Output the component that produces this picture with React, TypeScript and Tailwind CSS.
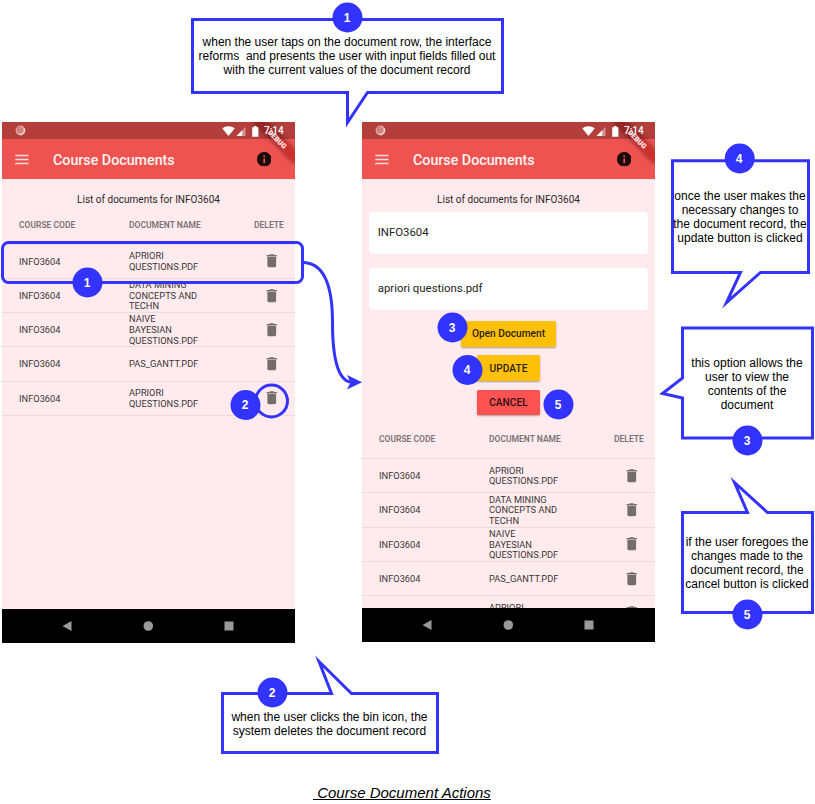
import type { ReactNode } from "react";

const documents: string[][] = [
  ["APRIORI", "QUESTIONS.PDF"],
  ["DATA MINING", "CONCEPTS AND", "TECHN"],
  ["NAIVE", "BAYESIAN", "QUESTIONS.PDF"],
  ["PAS_GANTT.PDF"],
  ["APRIORI", "QUESTIONS.PDF"],
];

function TrashIcon() {
  return (
    <svg viewBox="0 0 24 24" className="block h-[17.500px] w-[17.500px] fill-[#756c6e]">
      <path d="M6 19c0 1.1.9 2 2 2h8c1.1 0 2-.9 2-2V6.700H6V19zM19 4h-3.5l-1-1h-5l-1 1H5v2h14V4z" />
    </svg>
  );
}

function StatusBar() {
  return (
    <div className="relative z-10 flex h-[17px] items-center bg-[#00000040] pl-[13px]">
      <svg viewBox="0 0 11 11" className="h-[11px] w-[11px]">
        <circle cx="5.5" cy="5.5" r="4.9" fill="#e2a9a8" />
        <circle cx="4.9" cy="4.9" r="3.4" fill="#cf8180" />
        <path d="M9 3.2A4.3 4.3 0 0 1 5 9.6" fill="none" stroke="#f5dedd" strokeWidth="1" />
      </svg>
      <svg viewBox="0 0 38 12" className="ml-[196px] h-[12px] w-[38px]">
        <path d="M0.3 3.4C3.8.4 9.200.4 12.700 3.400L6.500 11z" fill="#fff" />
        <path d="M23.500 2v9h-9z" fill="#d58f8e" />
        <path d="M20.200 5.300V11h-5.700z" fill="#fff" />
        <path d="M32 1h2.600v1.200h1.800v9.600h-6.200V2.200H32z" fill="#fff" />
      </svg>
      <span className="ml-[4px] text-[10px] font-medium leading-[17px] text-white">7:14</span>
    </div>
  );
}

function AppBar() {
  return (
    <div className="flex h-[40px] items-center pl-[13px] pr-[24px]">
      <svg viewBox="0 0 14 11" className="h-[11px] w-[14px]">
        <path d="M0.300 1.500h13.200M0.300 5.500h13.200M0.300 9.500h13.200" stroke="#fbdddc" strokeWidth="1.600" />
      </svg>
      <span className="ml-[24px] pt-[1.500px] text-[14.260px] font-medium leading-[20px] text-[#fff4f4]">
        Course Documents
      </span>
      <svg viewBox="2 2 20 20" className="ml-auto h-[14.500px] w-[14.500px] fill-[#1b0b0b]">
        <path d="M12 2C6.480 2 2 6.480 2 12s4.480 10 10 10 10-4.480 10-10S17.520 2 12 2zm1.200 15.200h-2.400v-6.400h2.400v6.400zm0-8h-2.400V6.800h2.400v2.400z" />
      </svg>
    </div>
  );
}

function DebugRibbon() {
  return (
    <>
      <div className="absolute right-0 top-0 h-[57px] w-[57px] overflow-hidden">
        <div className="absolute left-[11.300px] top-[13px] h-[8.600px] w-[57px] rotate-45 bg-[#b71c1ca0] shadow-[0_0_5px_rgba(0,0,0,0.500)]" />
      </div>
      <div className="absolute right-0 top-0 z-20 h-[57px] w-[57px] overflow-hidden">
        <div className="absolute left-[11.300px] top-[13px] flex h-[8.600px] w-[57px] rotate-45 items-center justify-center pt-px text-[7.200px] font-black leading-none text-[#fff0f0]">
          DEBUG
        </div>
      </div>
    </>
  );
}

function TableHeader() {
  return (
    <div className="flex h-[40px] shrink-0 items-center border-b border-[#eddadd] pl-[17px] pt-[1.500px] text-[8.500px] font-semibold leading-none text-[#7b7274]">
      <span className="w-[110px]">COURSE CODE</span>
      <span className="w-[125px]">DOCUMENT NAME</span>
      <span>DELETE</span>
    </div>
  );
}

function TableRow({ name }: { name: string[] }) {
  return (
    <div className="flex h-[34.250px] shrink-0 items-center border-b border-[#eddadd] pl-[17px] text-[9.270px] leading-[10.600px] text-[#3a3637]">
      <span className="w-[110px] pt-[1.500px]">INFO3604</span>
      <span className="w-[133.500px] pt-[1.500px]">
        {name.map((line) => (
          <span key={line} className="block whitespace-nowrap">
            {line}
          </span>
        ))}
      </span>
      <TrashIcon />
    </div>
  );
}

function NavBar() {
  return (
    <div className="flex h-[34px] shrink-0 items-center bg-black pl-[60px]">
      <svg viewBox="0 0 172 10" className="h-[10px] w-[172px] fill-[#999]">
        <path d="M9.500 0v10L.5 5z" />
        <circle cx="86.300" cy="5" r="4.800" />
        <rect x="162.500" y="0.500" width="9" height="9" />
      </svg>
    </div>
  );
}

function Phone({ className, children }: { className: string; children: ReactNode }) {
  return (
    <div
      className={`absolute flex w-[293px] flex-col overflow-hidden bg-[#ffebee] font-['Roboto',sans-serif] ${className}`}
    >
      <div className="relative shrink-0 overflow-hidden bg-[#ef5350]">
        <StatusBar />
        <AppBar />
        <DebugRibbon />
      </div>
      <div className="flex min-h-0 flex-1 flex-col overflow-hidden">
        <p className="mt-[12px] h-[16px] shrink-0 pt-px text-center text-[10px] leading-[16px] text-[#2a2627]">
          List of documents for INFO3604
        </p>
        {children}
      </div>
      <NavBar />
    </div>
  );
}

function Field({ children }: { children: ReactNode }) {
  return (
    <div className="mx-[7px] flex h-[42px] shrink-0 items-center rounded-[4px] bg-white pl-[8.700px] text-[11.400px] leading-none text-[#222]">
      {children}
    </div>
  );
}

function ActionButton({ className, children }: { className: string; children: ReactNode }) {
  return (
    <button
      className={`block h-[25.700px] rounded-[1.500px] pt-px text-[10.200px] font-medium leading-none shadow-[0_1px_2px_rgba(0,0,0,0.350)] ${className}`}
    >
      {children}
    </button>
  );
}

const badges = [
  { label: "1", cx: 347.5, cy: 17.5 },
  { label: "1", cx: 87.5, cy: 282.5 },
  { label: "2", cx: 245.5, cy: 405 },
  { label: "3", cx: 452.5, cy: 327.5 },
  { label: "4", cx: 467.5, cy: 370 },
  { label: "5", cx: 558.5, cy: 404.5 },
  { label: "4", cx: 739.7, cy: 158.5 },
  { label: "3", cx: 747.5, cy: 440.5 },
  { label: "5", cx: 747.5, cy: 614.5 },
  { label: "2", cx: 272.5, cy: 692.5 },
];

function Note({ className, lines }: { className: string; lines: string[] }) {
  return (
    <div className={`absolute whitespace-pre text-center text-[12px] leading-[14px] text-black ${className}`}>
      {lines.map((line) => (
        <div key={line}>{line}</div>
      ))}
    </div>
  );
}

export default function App() {
  return (
    <div className="relative h-[804px] w-[815px] overflow-hidden bg-white font-['Liberation_Sans',Arial,sans-serif]">
      <Phone className="left-[2px] top-[122px] h-[521px]">
        <div className="-mt-[2.500px] flex flex-col">
          <TableHeader />
          {documents.map((name, i) => (
            <TableRow key={i} name={name} />
          ))}
        </div>
      </Phone>

      <Phone className="left-[362px] top-[122px] h-[520px]">
        <div className="mt-[4.500px] flex shrink-0 flex-col gap-[14.200px]">
          <Field>INFO3604</Field>
          <Field>apriori questions.pdf</Field>
        </div>
        <div className="mt-[11.500px] flex shrink-0 flex-col items-center gap-[8.500px]">
          <ActionButton className="w-[95px] bg-[#ffc107] text-[#2b2205]">Open Document</ActionButton>
          <ActionButton className="w-[63px] bg-[#ffc107] text-[#2b2205]">UPDATE</ActionButton>
          <ActionButton className="w-[63px] bg-[#ff5252] text-[#2b0e0e]">CANCEL</ActionButton>
        </div>
        <div className="mt-[3.800px] flex flex-col">
          <TableHeader />
          {documents.map((name, i) => (
            <TableRow key={i} name={name} />
          ))}
        </div>
      </Phone>

      <svg
        viewBox="0 0 815 804"
        className="pointer-events-none absolute left-0 top-0 h-[804px] w-[815px]"
        fill="none"
        stroke="#3333ff"
        strokeWidth="3"
        strokeMiterlimit="10"
      >
        <rect x="2.500" y="242.500" width="300" height="40" rx="6" />
        <circle cx="271.500" cy="401" r="16" />
        <path d="M302.500 262.500Q332.500 262.500 332.500 322.500T353 382.300" />
        <path d="M362 382.300L347 389.500L350.500 382.300L347 375z" fill="#3333ff" stroke="none" />
        <path d="M192.500 19.500H502.500V92.500H367.500L347.500 122.500V92.500H192.500z" fill="#fff" />
        <path d="M672.500 160.800H808.500V272.500H760.500L726.500 302.500L740.500 272.500H672.500z" fill="#fff" />
        <path d="M682.500 328H812.500V438H682.500V398L662.500 393.500L682.500 378z" fill="#fff" />
        <path d="M682.500 512.500H747.500L734.500 482.500L767.500 512.500H812.500V612.500H682.500z" fill="#fff" />
        <path d="M222.500 693.500H331.500L319 661.500L351.500 693.500H437.500V752.500H222.500z" fill="#fff" />
        {badges.map((b) => (
          <circle key={`${b.cx}-${b.cy}`} cx={b.cx} cy={b.cy} r="15" fill="#3333ff" stroke="none" />
        ))}
      </svg>

      <Note
        className="left-[192px] top-[35px] w-[310px]"
        lines={[
          "when the user taps on the document row, the interface",
          "reforms  and presents the user with input fields filled out",
          "with the current values of the document record",
        ]}
      />
      <Note
        className="left-[670px] top-[189px] w-[140px]"
        lines={["once the user makes the", "necessary changes to", "the document record, the", "update button is clicked"]}
      />
      <Note
        className="left-[682px] top-[356px] w-[130px]"
        lines={["this option allows the", "user to view the", "contents of the", "document"]}
      />
      <Note
        className="left-[682px] top-[535px] w-[130px]"
        lines={["if the user foregoes the", "changes made to the", "document record, the", "cancel button is clicked"]}
      />
      <Note
        className="left-[222px] top-[710px] w-[215px]"
        lines={["when the user clicks the bin icon, the", "system deletes the document record"]}
      />

      {badges.map((b) => (
        <div
          key={`${b.cx}-${b.cy}`}
          className="absolute flex h-[30px] w-[30px] items-center justify-center text-[12px] font-bold leading-[14px] text-white"
          style={{ left: Math.floor(b.cx - 15), top: Math.ceil(b.cy - 15) }}
        >
          {b.label}
        </div>
      ))}

      <div className="absolute left-[313px] top-[784px] whitespace-pre text-[15px] italic leading-[17px] text-black underline">
        {" Course Document Actions"}
      </div>
    </div>
  );
}
